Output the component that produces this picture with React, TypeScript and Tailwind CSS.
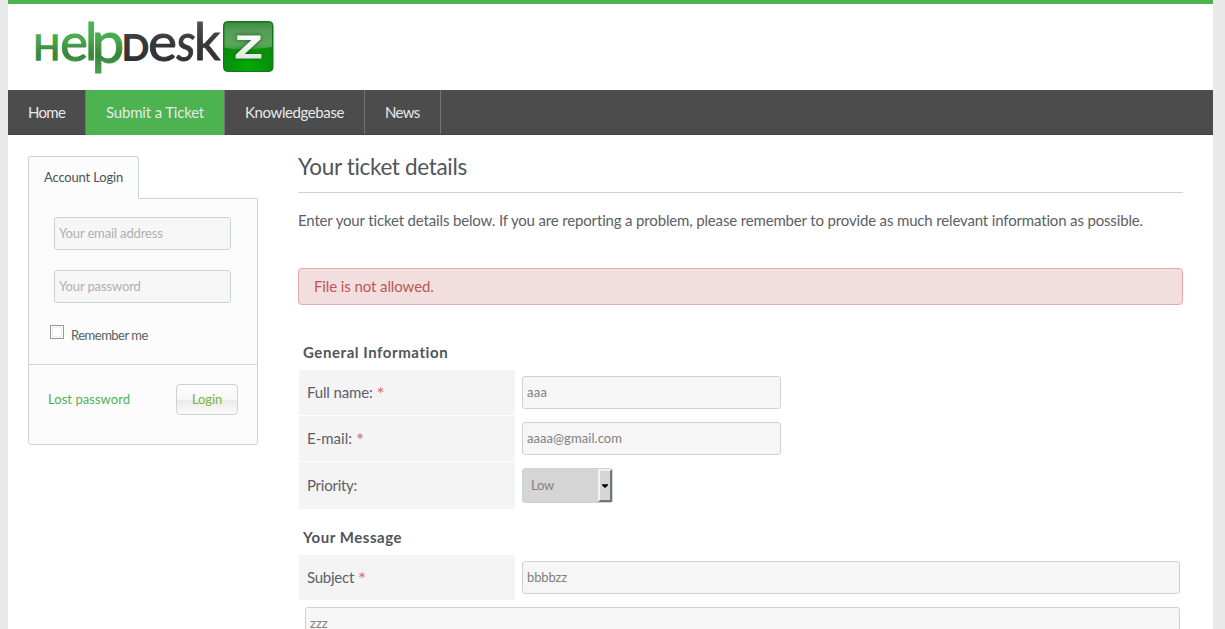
import type { ReactNode } from "react";

const field =
  "flex items-center rounded-[3px] border border-[#cdd2d2] bg-[#f6f6f6] h-[33px] px-1 text-[13px] text-[#808080]";

function Logo() {
  return (
    <svg width="250" height="66" viewBox="28 14 250 66" className="overflow-visible" role="img" aria-label="HelpDeskZ">
      <defs>
        <linearGradient id="green" gradientUnits="userSpaceOnUse" x1="0" y1="20" x2="0" y2="73">
          <stop offset="0" stopColor="#4db553" />
          <stop offset="0.35" stopColor="#48a94e" />
          <stop offset="0.65" stopColor="#37853b" />
          <stop offset="1" stopColor="#48a44c" />
        </linearGradient>
        <linearGradient id="dark" gradientUnits="userSpaceOnUse" x1="0" y1="20" x2="0" y2="62">
          <stop offset="0" stopColor="#505052" />
          <stop offset="0.5" stopColor="#39393b" />
          <stop offset="1" stopColor="#303032" />
        </linearGradient>
        <radialGradient id="tile" cx="0.5" cy="0.85" r="0.75">
          <stop offset="0" stopColor="#04ac07" />
          <stop offset="1" stopColor="#0a7d10" />
        </radialGradient>
        <linearGradient id="gloss" x1="0" y1="0" x2="0" y2="1">
          <stop offset="0" stopColor="#3f8a42" />
          <stop offset="0.3" stopColor="#559d56" />
          <stop offset="0.8" stopColor="#5aa75a" />
          <stop offset="1" stopColor="#3f9f40" />
        </linearGradient>
        <linearGradient id="silver" gradientUnits="userSpaceOnUse" x1="0" y1="34" x2="0" y2="59">
          <stop offset="0" stopColor="#fff" />
          <stop offset="1" stopColor="#e4e4e4" />
        </linearGradient>
      </defs>
      <g fontFamily="Lato, sans-serif" fill="url(#green)" stroke="url(#green)" strokeWidth="0.9">
        <text x="33.5" y="59.5" fontSize="35" strokeWidth="1.6" textLength="26.5" lengthAdjust="spacingAndGlyphs">H</text>
        <text x="60" y="60.500" fontSize="53" textLength="28" lengthAdjust="spacingAndGlyphs">e</text>
        <text x="85" y="60" fontSize="53">l</text>
        <text x="91.5" y="62.5" fontSize="58" textLength="33" lengthAdjust="spacingAndGlyphs">p</text>
      </g>
      <g fontFamily="Lato, sans-serif" fill="url(#dark)" stroke="url(#dark)" strokeWidth="0.9">
        <text x="122" y="59.5" fontSize="35" strokeWidth="1.8" textLength="27" lengthAdjust="spacingAndGlyphs">D</text>
        <text x="148" y="60.500" fontSize="53" textLength="29" lengthAdjust="spacingAndGlyphs">e</text>
        <text x="176.5" y="60.500" fontSize="53" textLength="19" lengthAdjust="spacingAndGlyphs" fontStyle="italic">s</text>
        <text x="194" y="60" fontSize="53" textLength="26.5" lengthAdjust="spacingAndGlyphs">k</text>
      </g>
      <rect x="223.5" y="21.5" width="49.5" height="50" rx="4" fill="url(#tile)" stroke="#12761a" />
      <path d="M224.5 25.5a3 3 0 0 1 3-3h41.500a3 3 0 0 1 3 3V47Q248 51 224.500 48Z" fill="url(#gloss)" />
      <text x="235" y="58" fontFamily="Liberation Sans, sans-serif" fontWeight="700" fontSize="32" textLength="27" lengthAdjust="spacingAndGlyphs" fill="url(#silver)" stroke="url(#silver)" strokeWidth="0.9" className="drop-shadow-[0_0_2px_rgba(5,60,8,0.7)]">Z</text>
    </svg>
  );
}

function Nav() {
  const item = "flex h-full items-center border-r border-[#737373] pl-5 pt-px";
  return (
    <nav className="flex h-[45px] border-b border-[#434343] bg-[#4c4c4c] text-[15px] text-[#e8e8e8]">
      <a className={`${item} w-[78px] tracking-[-0.7px]`}>Home</a>
      <a className="-mb-px flex h-[45px] w-[139px] items-center border-r border-[#737373] bg-[#4cb350] pl-5 tracking-[-0.18px]">Submit a Ticket</a>
      <a className={`${item} w-[140px] tracking-[-0.4px]`}>Knowledgebase</a>
      <a className={`${item} w-[76px] tracking-[-0.65px]`}>News</a>
    </nav>
  );
}

function Sidebar() {
  return (
    <aside className="w-[230px] shrink-0 pt-[21px] text-[13px]">
      <div className="relative z-10 -mb-px flex h-[43px] w-[111px] items-center rounded-t-[3px] border border-b-0 border-[#cdd2d2] bg-[#fcfcfc] pl-[15px] tracking-[-0.17px] text-[#505050]">
        Account Login
      </div>
      <div className="h-[247px] rounded-b-[3px] border border-[#cdd2d2] bg-[#fcfcfc]">
        <div className="flex h-[166px] flex-col gap-5 border-b border-[#cfd5da] pt-[18px]">
          <div className={`${field} ml-[25px] w-[177px] tracking-[-0.14px] !text-[#b0b0b0]`}>Your email address</div>
          <div className={`${field} ml-[25px] w-[177px] tracking-[-0.13px] !text-[#b0b0b0]`}>Your password</div>
          <label className="ml-[21px] flex items-start">
            <span className="mt-0.5 h-3.5 w-3.5 border border-[#969696] bg-white p-px"><span className="block h-full w-full border border-[#eee]" /></span>
            <span className="ml-[7px] mt-[3px] leading-[18px] tracking-[-0.5px] text-[#5a5e64]">Remember me</span>
          </label>
        </div>
        <div className="flex items-center justify-between pl-[19px] pr-[19px] pt-[19px]">
          <a className="tracking-[0.04px] text-[#4cb350]">Lost password</a>
          <button className="flex h-[31px] w-[62px] items-center justify-center rounded-[4px] border border-[#cdd2d2] bg-[linear-gradient(#fdfdfd_0%,#f6f6f6_50%,#eaeaea_52%,#fbfbfb_100%)] tracking-[-0.1px] text-[#7cb342]">Login</button>
        </div>
      </div>
    </aside>
  );
}

function Row({ label, tall, children }: { label: ReactNode; tall?: boolean; children: ReactNode }) {
  return (
    <div className={`flex gap-[7px] pl-px pr-[3px] ${tall ? "h-[47px]" : "h-[45px]"}`}>
      <div className="flex w-[216px] shrink-0 items-center bg-[#f4f4f4] pl-2 text-[#5c6066]">{label}</div>
      <div className="flex-1 pt-1.5">{children}</div>
    </div>
  );
}

const Star = () => <span className="relative top-[3px] ml-1 text-[19px] leading-none tracking-normal text-[#d4706f]">*</span>;

function Ticket() {
  return (
    <main className="ml-10 w-[885px] shrink-0 text-[15px] text-[#5c6066]">
      <h1 className="flex h-[58px] items-center border-b border-[#cdd2d2] pt-[7px] text-[22.5px] tracking-[-0.33px] text-[#50555a]">Your ticket details</h1>
      <p className="mt-[17px] whitespace-nowrap leading-5 tracking-[-0.155px]">
        Enter your ticket details below. If you are reporting a problem, please remember to provide as much relevant information as possible.
      </p>
      <div className="mt-[38px] flex h-[37px] items-center rounded-[4px] border border-[#e4a9ab] bg-[#f2dede] pl-[15px] tracking-[-0.1px] text-[#bd5755]">File is not allowed.</div>
      <h2 className="mt-[37px] pl-[5px] font-bold leading-5 tracking-[0.57px] text-[#50555b]">General Information</h2>
      <div className="mt-2 flex flex-col gap-px">
        <Row label={<span className="pb-0.5 leading-5 tracking-[-0.15px]">Full name:<Star /></span>}>
          <div className={`${field} w-[259px] tracking-[0.3px]`}>aaa</div>
        </Row>
        <Row label={<span className="pb-0.5 leading-5">E-mail:<Star /></span>}>
          <div className={`${field} w-[259px] tracking-[0.07px]`}>aaaa@gmail.com</div>
        </Row>
        <Row tall label={<span className="tracking-[-0.25px]">Priority:</span>}>
          <div className="flex h-[35px] w-[91px] items-center justify-between rounded-[3px] border border-[#cdd2d2] bg-[#d5d5d5] pl-2 text-[13px] tracking-[-0.2px] text-[#808080]">
            Low
            <span className="flex h-[33px] w-3.5 items-center justify-center border-2 border-t-[#f2f2f2] border-r-[#757575] border-b-[#757575] border-l-[#f2f2f2] bg-[#d5d5d5]">
              <svg width="6" height="4" viewBox="0 0 7 4" className="shrink-0"><path d="M0 0h7v1L4 4H3L0 1Z" fill="#000" /></svg>
            </span>
          </div>
        </Row>
      </div>
      <h2 className="mt-[18px] pl-[5px] font-bold leading-5 tracking-[0.55px] text-[#50555b]">Your Message</h2>
      <div className="mt-2">
        <Row label={<span className="pb-0.5 leading-5 tracking-[-0.25px]">Subject<Star /></span>}>
          <div className={`${field} tracking-[-0.13px]`}>bbbbzz</div>
        </Row>
      </div>
      <div className="ml-[7px] mr-[3px] mt-[7px] h-24 rounded-[3px] border border-[#cdd2d2] bg-[#f6f6f6] px-1 pt-1.5 text-[13px] leading-[18px] text-[#808080]">zzz</div>
    </main>
  );
}

export default function App() {
  return (
    <div className="h-[629px] overflow-hidden bg-[#e9e9e9] pl-2 pr-3 font-['Lato',sans-serif]">
      <div className="h-full w-[1205px] border-t-4 border-[#4cb350] bg-white">
        <header className="h-[86px] pl-5 pt-2.5"><Logo /></header>
        <Nav />
        <div className="flex pl-5">
          <Sidebar />
          <Ticket />
        </div>
      </div>
    </div>
  );
}
